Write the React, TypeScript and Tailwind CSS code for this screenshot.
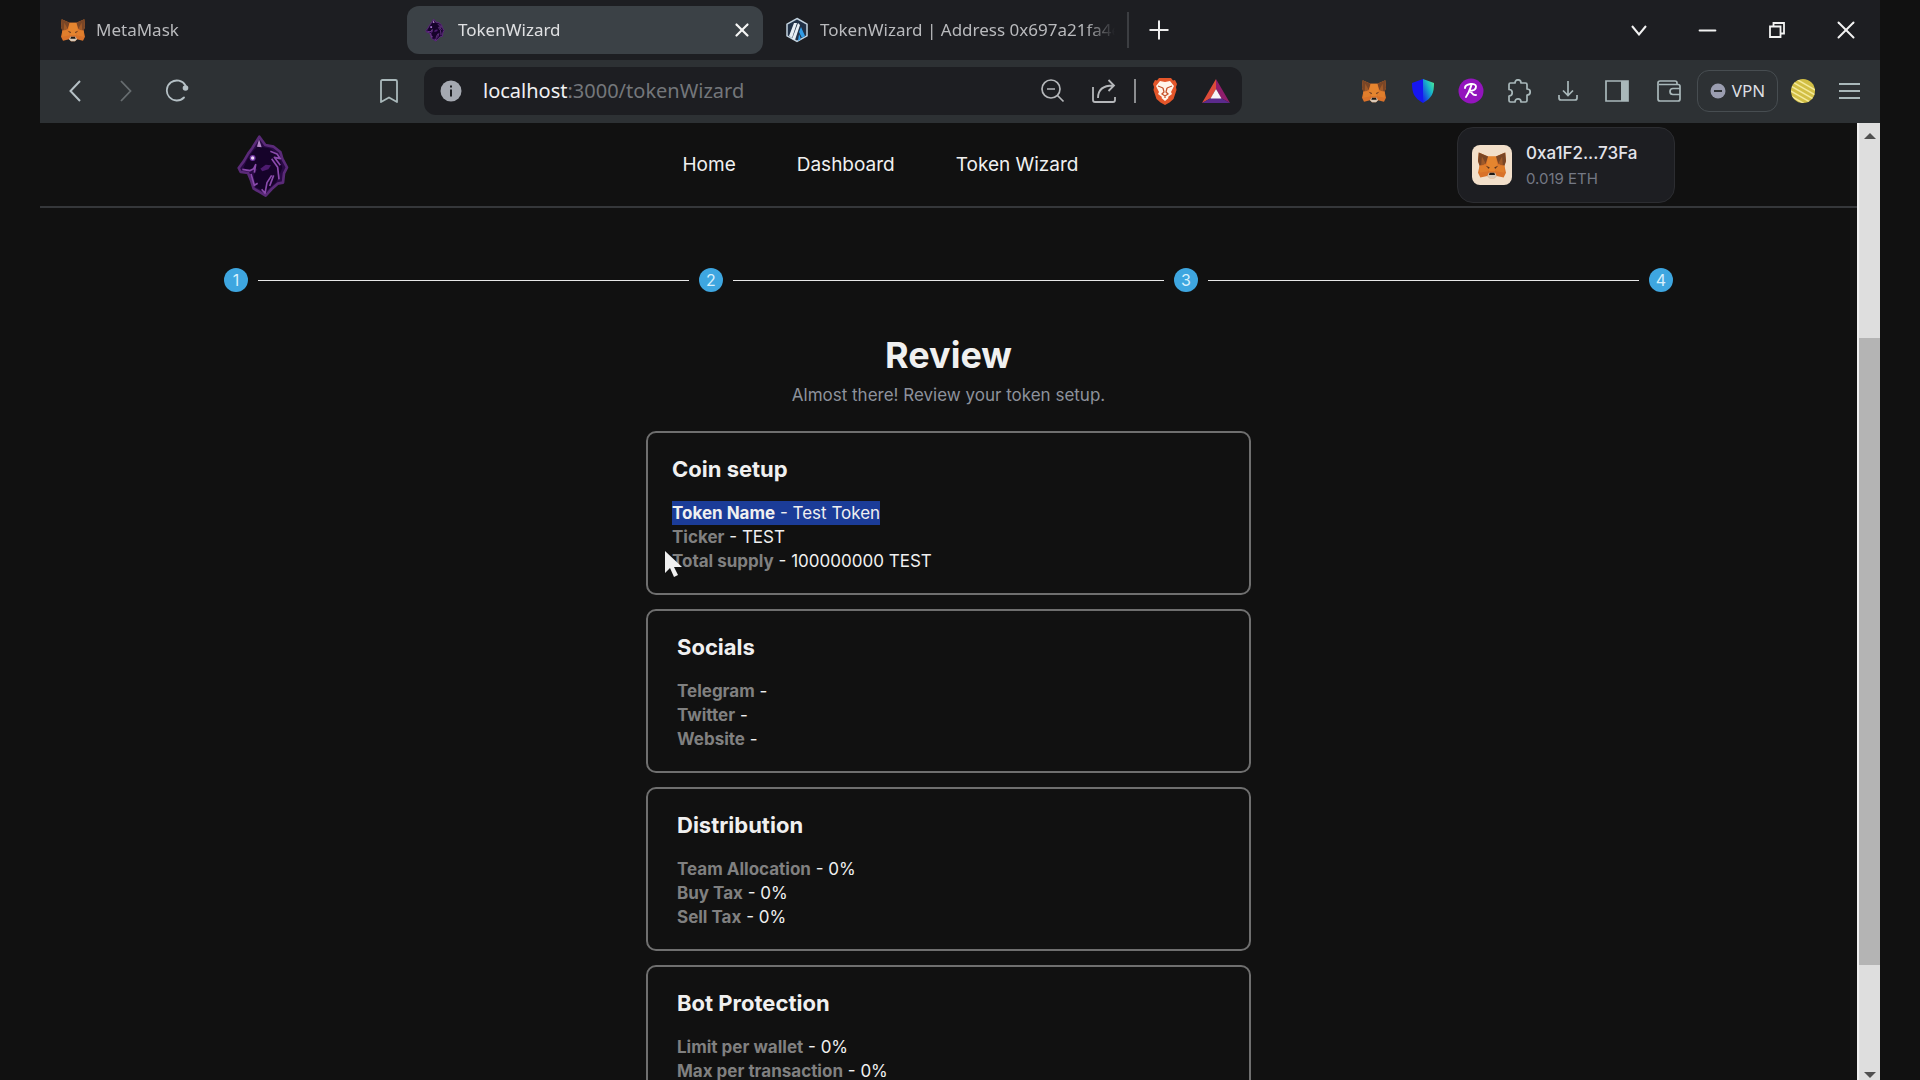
import type { ReactNode } from "react";
import { Minus, Plus, X } from "lucide-react";

type Row = { label: string; value: string; selected?: boolean };
type Section = { title: string; inset: string; rows: Row[] };

const steps = [1, 2, 3, 4];

const sections: Section[] = [
  {
    title: "Coin setup",
    inset: "px-6",
    rows: [
      { label: "Token Name", value: "Test Token", selected: true },
      { label: "Ticker", value: "TEST" },
      { label: "Total supply", value: "100000000 TEST" },
    ],
  },
  {
    title: "Socials",
    inset: "px-[29px]",
    rows: [
      { label: "Telegram", value: "" },
      { label: "Twitter", value: "" },
      { label: "Website", value: "" },
    ],
  },
  {
    title: "Distribution",
    inset: "px-[29px]",
    rows: [
      { label: "Team Allocation", value: "0%" },
      { label: "Buy Tax", value: "0%" },
      { label: "Sell Tax", value: "0%" },
    ],
  },
  {
    title: "Bot Protection",
    inset: "px-[29px]",
    rows: [
      { label: "Limit per wallet", value: "0%" },
      { label: "Max per transaction", value: "0%" },
    ],
  },
];

export default function App() {
  return (
    <div className="h-screen overflow-hidden bg-[#111111] px-10">
      <div className="flex h-full flex-col">
        <TabStrip />
        <Toolbar />
        <div className="flex min-h-0 flex-1">
          <div className="min-w-0 flex-1 overflow-hidden font-['Inter',sans-serif] text-[#f0f0f0]">
            <SiteHeader />
            <main className="pb-10">
              <Stepper />
              <Review />
            </main>
          </div>
          <Scrollbar />
        </div>
      </div>
    </div>
  );
}

function TabStrip() {
  return (
    <div className="flex h-[60px] shrink-0 items-center bg-[#1d1e22] pl-[5px] font-['Noto_Sans',sans-serif] text-[17px] text-[#b9babd]">
      <div className="flex min-w-0 gap-[6px]">
        <Tab icon={<Fox className="size-6" />} title="MetaMask" />
        <Tab icon={<Wolf className="h-6 w-6" />} title="TokenWizard" active />
        <Tab icon={<Arbiscan />} title="TokenWizard | Address 0x697a21fa4e" />
      </div>
      <span className="ml-[2px] h-9 w-[2px] bg-[#3c3e42]" />
      <button aria-label="New tab" className="flex w-[60px] justify-center text-[#eeeeee]">
        <Plus size={30} strokeWidth={1.6} />
      </button>
      <div className="ml-auto flex text-[#f2f2f2]">
        <WindowButton label="Search tabs">
          <svg viewBox="0 0 16 11" className="h-[11px] w-4" fill="none" stroke="currentColor" strokeWidth="2">
            <path d="M1 1l7 8.5L15 1" />
          </svg>
        </WindowButton>
        <WindowButton label="Minimize">
          <Minus size={27} strokeWidth={1.8} />
        </WindowButton>
        <WindowButton label="Restore">
          <svg viewBox="0 0 16 16" className="size-4" fill="none" stroke="currentColor" strokeWidth="1.8">
            <path d="M1 4.5h10.5V15H1zM4.5 4.5V1H15v10.5h-3.5" />
          </svg>
        </WindowButton>
        <WindowButton label="Close">
          <X size={30} strokeWidth={1.6} />
        </WindowButton>
      </div>
    </div>
  );
}

function Tab({ icon, title, active }: { icon: ReactNode; title: string; active?: boolean }) {
  return (
    <div
      className={`flex h-12 w-[356px] min-w-0 items-center rounded-xl pr-[10px] pl-4 ${
        active ? "bg-[#3b4146] text-[#dfe0e2]" : ""
      }`}
    >
      {icon}
      <span className="ml-[11px] flex-1 overflow-hidden whitespace-nowrap [mask-image:linear-gradient(to_right,black_90%,transparent)]">
        {title}
      </span>
      {active ? (
        <button aria-label="Close tab" className="ml-2 text-[#f5f5f5]">
          <X size={22} strokeWidth={2.4} />
        </button>
      ) : null}
    </div>
  );
}

function WindowButton({ label, children }: { label: string; children: ReactNode }) {
  return (
    <button aria-label={label} className="flex h-10 w-[69px] items-center justify-center">
      {children}
    </button>
  );
}

function Toolbar() {
  return (
    <div className="flex h-[63px] shrink-0 items-center bg-[#2d3134] pb-px font-['Noto_Sans',sans-serif] text-[#a9b2b6]">
      <div className="flex w-[384px] shrink-0 items-center pl-[9px]">
        <ToolButton label="Back" width="w-[51px]">
          <svg viewBox="0 0 12 22" className="h-[22px] w-3" fill="none" stroke="#b5c0c5" strokeWidth="2">
            <path d="M11 1L1.5 11 11 21" />
          </svg>
        </ToolButton>
        <ToolButton label="Forward" width="w-[51px]">
          <svg viewBox="0 0 12 22" className="h-[22px] w-3" fill="none" stroke="#676d70" strokeWidth="1.8">
            <path d="M1 1l9.5 10L1 21" />
          </svg>
        </ToolButton>
        <ToolButton label="Reload" width="w-[51px]">
          <svg viewBox="0 0 24 24" className="size-6" fill="none" stroke="#b5c0c5" strokeWidth="1.8">
            <path d="M19 18.5A10 10 0 1 1 20.5 6.5" strokeLinecap="round" />
            <circle cx="20.5" cy="9" r="2.8" fill="#b5c0c5" stroke="none" />
          </svg>
        </ToolButton>
        <div className="mr-[11px] ml-auto">
          <ToolButton label="Bookmark this page" width="w-12">
            <svg viewBox="0 0 18 24" className="h-6 w-[18px]" fill="none" stroke="#a9b8ba" strokeWidth="1.8">
              <path d="M1 2.5Q1 1 2.5 1h13Q17 1 17 2.5V23l-8-4.5L1 23z" strokeLinejoin="round" />
            </svg>
          </ToolButton>
        </div>
      </div>

      <div className="flex h-12 min-w-0 flex-1 items-center rounded-xl bg-[#1d1e22] pl-4">
        <svg viewBox="0 0 22 22" className="size-[22px] shrink-0">
          <circle cx="11" cy="11" r="10.5" fill="#a5a9b1" />
          <path d="M11 9.5v7M11 5.5v2" stroke="#1d1e22" strokeWidth="2" />
        </svg>
        <a href="#" className="ml-[21px] min-w-0 flex-1 truncate text-[20px] text-[#74777b]">
          <span className="text-[#f0f0f2]">localhost</span>:3000/tokenWizard
        </a>
        <ToolButton label="Zoom" width="w-[51px]">
          <svg viewBox="0 0 24 24" className="size-6" fill="none" stroke="#b5b7ba" strokeWidth="1.7">
            <circle cx="10" cy="10" r="9" />
            <path d="M6 10h8M16.5 16.5l6 6" />
          </svg>
        </ToolButton>
        <ToolButton label="Share" width="w-[51px]">
          <svg viewBox="0 0 24 24" className="size-6" fill="none" stroke="#b5b7ba" strokeWidth="1.8">
            <path d="M1 8v13q0 2 2 2h18q2 0 2-2v-3M6 19C6 11 11 6.5 21 6.5M16.5 1l5.5 5.5-5.5 5.5" />
          </svg>
        </ToolButton>
        <span className="mr-1 ml-[5px] h-6 w-[2px] bg-[#8b8d90]" />
        <ToolButton label="Brave Shields" width="w-[50px]">
          <Lion />
        </ToolButton>
        <ToolButton label="Brave Rewards" width="w-[52px]">
          <svg viewBox="0 0 28 24" className="h-6 w-7">
            <path d="M14 0 0 24l9-5 5-9z" fill="#dd4b39" />
            <path d="M14 0l14 24-9-5-5-9z" fill="#8f1d6b" />
            <path d="M0 24h28l-9-5H9z" fill="#5b2a8c" />
            <path d="M14 10l5.5 9.5h-11z" fill="#f7f4f7" />
          </svg>
        </ToolButton>
      </div>

      <div className="ml-[107px] flex shrink-0 items-center pr-[9px]">
        <ToolButton label="MetaMask" width="w-[49px]">
          <Fox className="size-6" />
        </ToolButton>
        <ToolButton label="Trust Wallet" width="w-[49px]">
          <svg viewBox="0 0 22 24" className="h-6 w-[22px]">
            <defs>
              <linearGradient id="shield" x1="1" y1="0" x2="0" y2="1">
                <stop offset="0" stopColor="#58f08c" />
                <stop offset="0.4" stopColor="#18b8c8" />
                <stop offset="1" stopColor="#1414ee" />
              </linearGradient>
            </defs>
            <path d="M11 0 0 4c0 10 2 15 11 20z" fill="#1616f0" />
            <path d="M11 0l11 4c0 10-2 15-11 20z" fill="url(#shield)" />
          </svg>
        </ToolButton>
        <ToolButton label="Ronin" width="w-[48px]">
          <svg viewBox="0 0 26 26" className="size-[26px]">
            <circle cx="13" cy="13" r="12.5" fill="#9314bd" />
            <path
              d="M7 10C7 6 18 4 18 8.5c0 3.5-4 4.5-7 4.5 3 0 3 5 7 4M13.5 7C12 11 11 15 8 19"
              fill="none"
              stroke="#ffffff"
              strokeWidth="1.9"
              strokeLinecap="round"
            />
          </svg>
        </ToolButton>
        <ToolButton label="Extensions" width="w-[48px]">
          <svg viewBox="0 0 24 24" className="size-6" fill="none" stroke="#a9b8ba" strokeWidth="1.7">
            <path
              d="M3.5 4H8C8-.3 14-.3 14 4h4.5q1.500 0 1.500 1.500V10c4.300 0 4.300 6 0 6v5.500q0 1.500-1.500 1.500H14c0-4.300-6-4.300-6 0H3.500Q2 23 2 21.500V17c4.300 0 4.300-6.500 0-6.500v-5Q2 4 3.500 4z"
              strokeLinejoin="round"
            />
          </svg>
        </ToolButton>
        <ToolButton label="Downloads" width="w-[49px]">
          <svg viewBox="0 0 20 20" className="size-5" fill="none" stroke="#a9b8ba" strokeWidth="1.7">
            <path d="M10 0v14M5 9.5l5 5 5-5M1 14v3q0 2 2 2h14q2 0 2-2v-3" />
          </svg>
        </ToolButton>
        <ToolButton label="Sidebar" width="w-[49px]">
          <svg viewBox="0 0 24 22" className="h-[22px] w-6">
            <path d="M1 1h22v20H1z" fill="none" stroke="#a9b8ba" strokeWidth="1.7" />
            <path d="M16 1h7v20h-7z" fill="#a9b8ba" />
          </svg>
        </ToolButton>
        <ToolButton label="Wallet" width="w-[56px]">
          <svg viewBox="0 0 24 22" className="h-[22px] w-6" fill="none" stroke="#a9b8ba" strokeWidth="1.7">
            <path d="M20 4.5V3q0-2-2-2H3Q1 1 1 3v16q0 2 2 2h18q2 0 2-2V6.5q0-2-2-2H2M23 8.500h-7q-3 0-3 3t3 3h7" />
          </svg>
        </ToolButton>
        <button className="flex h-[42px] w-[81px] items-center justify-center gap-[6px] rounded-xl border border-[#474d51] text-[17px] text-[#dddfe2]">
          <svg viewBox="0 0 16 16" className="size-4">
            <circle cx="8" cy="8" r="7.5" fill="#9a9db0" />
            <path d="M4 8h8" stroke="#2d3134" strokeWidth="2" />
          </svg>
          VPN
        </button>
        <ToolButton label="Profile" width="w-[49px]">
          <svg viewBox="0 0 24 24" className="size-6">
            <defs>
              <clipPath id="avatar">
                <circle cx="12" cy="12" r="12" />
              </clipPath>
            </defs>
            <g clipPath="url(#avatar)">
              <path d="M0 0h24v24H0z" fill="#d2bf45" />
              <path
                d="M-2-4l28 16M-2 1l28 16M-2 6l28 16M-2 11l28 16M-2 16l28 16"
                stroke="#f4e99a"
                strokeWidth="1.5"
              />
            </g>
          </svg>
        </ToolButton>
        <ToolButton label="Menu" width="w-11">
          <svg viewBox="0 0 21 16" className="h-4 w-[21px]" stroke="#a9b8ba" strokeWidth="1.8">
            <path d="M0 1h21M0 8h21M0 15h21" />
          </svg>
        </ToolButton>
      </div>
    </div>
  );
}

function ToolButton({ label, width, children }: { label: string; width: string; children: ReactNode }) {
  return (
    <button aria-label={label} className={`flex h-10 shrink-0 items-center justify-center ${width}`}>
      {children}
    </button>
  );
}

function SiteHeader() {
  return (
    <header className="flex h-[85px] items-center justify-between border-b-2 border-[#35373a] px-[182px]">
      <a href="#" aria-label="TokenWizard" className="flex w-[82px] justify-center pt-[3px]">
        <Wolf className="h-16 w-[52px]" />
      </a>
      <nav className="flex gap-[61px] pt-[2px] text-[19px]">
        <a href="#">Home</a>
        <a href="#">Dashboard</a>
        <a href="#">Token Wizard</a>
      </nav>
      <button className="flex h-[76px] w-[218px] items-center gap-[14px] rounded-2xl border border-[#2c2d31] bg-[#1d1e22] pl-[14px] text-left">
        <span className="flex size-10 items-center justify-center rounded-lg bg-[#f2dfca]">
          <Fox className="size-7" />
        </span>
        <span className="flex flex-col">
          <span className="text-[17px] leading-7 font-medium text-[#e4e4ea]">0xa1F2...73Fa</span>
          <span className="text-[15px] leading-6 text-[#757985]">0.019 ETH</span>
        </span>
      </button>
    </header>
  );
}

function Stepper() {
  return (
    <ol className="flex items-center px-[184px] pt-[60px]">
      {steps.map((step) => (
        <li key={step} className={`flex items-center ${step < steps.length ? "flex-1" : ""}`}>
          <span className="flex size-6 items-center justify-center rounded-full bg-[#3ea6e0] text-[16px] text-[#d8f0fc]">
            {step}
          </span>
          {step < steps.length ? <span className="mx-[10px] h-px flex-1 bg-[#e8e8e8]" /> : null}
        </li>
      ))}
    </ol>
  );
}

function Review() {
  return (
    <section className="mt-10 flex flex-col items-center">
      <h1 className="text-[36px] leading-[46px] font-bold">Review</h1>
      <p className="mt-[5px] text-[17px] leading-6 text-[#8d929c]">Almost there! Review your token setup.</p>
      <div className="mt-6 flex w-full max-w-[605px] flex-col gap-[14px]">
        {sections.map((section) => (
          <ReviewCard key={section.title} section={section} />
        ))}
      </div>
    </section>
  );
}

function ReviewCard({ section }: { section: Section }) {
  return (
    <article className={`relative rounded-[10px] border-2 border-[#6f6f6f] py-5 ${section.inset}`}>
      <h2 className="text-[22px] leading-8 font-bold">{section.title}</h2>
      <ul className="mt-4 text-[17px] leading-6">
        {section.rows.map((row) => (
          <li key={row.label} className="flex">
            <span className={row.selected ? "bg-[#1b3c98]" : ""}>
              <b className={row.selected ? "font-bold" : "font-bold text-[#808080]"}>{row.label}</b> - {row.value}
            </span>
          </li>
        ))}
      </ul>
      {section.title === "Coin setup" ? <Pointer /> : null}
    </article>
  );
}

function Pointer() {
  return (
    <svg viewBox="0 0 17 26" className="absolute top-[118px] left-[17px] h-[26px] w-[17px]">
      <path d="M0 0v22l5-5 4 9 4-2-4-8h8z" fill="#f0f0f0" />
    </svg>
  );
}

function Scrollbar() {
  return (
    <div className="flex w-[23px] shrink-0 flex-col items-center border-l-2 border-[#eeeeee] bg-[#dedede] pt-[10px] pb-[2px]">
      <svg viewBox="0 0 12 6" className="h-[6px] w-3">
        <path d="M0 6l6-6 6 6z" fill="#505050" />
      </svg>
      <div className="flex w-full flex-1 flex-col">
        <div className="grow-[199]" />
        <div className="grow-[627] bg-[#b4b4b4]" />
        <div className="grow-[107]" />
      </div>
      <svg viewBox="0 0 12 6" className="h-[6px] w-3">
        <path d="M0 0l6 6 6-6z" fill="#505050" />
      </svg>
    </div>
  );
}

function Fox({ className }: { className: string }) {
  return (
    <svg viewBox="0 0 36 34" className={`shrink-0 ${className}`}>
      <path d="M1 1l12 5h10l12-5 1 11-2 6 2 9-3 6-9-2-3 3h-6l-3-3-9 2-3-6 2-9-2-6z" fill="#d9722a" />
      <path d="M1 1l12 5-3 9-8 3-2-6zM35 1L23 6l3 9 8 3 2-6z" fill="#7a4626" />
      <path d="M5 6l5 9-6 3zM31 6l-5 9 6 3z" fill="#a05a28" />
      <path d="M13 6h10l2 10-3 9h-8l-3-9z" fill="#e5852f" />
      <path d="M2 18l10-1 1 8-11 2zM34 18l-10-1-1 8 11 2z" fill="#e07e2c" />
      <path d="M10 18l5 2-1 2zM26 18l-5 2 1 2z" fill="#5a3420" />
      <path d="M12 31l2-4h8l2 4-3 3h-6z" fill="#d8c9b8" />
      <path d="M15 27h6l1 3h-8z" fill="#1c1815" />
    </svg>
  );
}

function Wolf({ className }: { className: string }) {
  return (
    <svg viewBox="50 30 156 192" className={`shrink-0 ${className}`} strokeLinejoin="round">
      <path
        d="M117 38l18 25 25 5 20 16 6 20 14 26-9 18-3 28-16 3-18 16-18 20-20-12-16-9-8-25-9-22-22-3-6-12 15-20 14-24 12-16z"
        fill="#2a0a45"
        stroke="#5a2a78"
        strokeWidth="8"
      />
      <path
        d="M112 66l40 8 24 22 10 36-18 42-34 30-28-14-6-36 12-20-16 2-28-2 12-26 16-24z"
        fill="#16032a"
      />
      <path
        d="M66 136l22 4 12-6 6-12-4 24M92 150l10 34 10-6M124 196l10 12 6-32 14-22M148 186l12-32M176 166l-4-36-18-26M150 82l20 8 10 14-18-4 18 24"
        fill="none"
        stroke="#8a4aac"
        strokeWidth="5"
      />
      <path d="M116 46l-6 22 14 2z" fill="#b58ac8" />
      <path d="M120 134l16-12 16 2-8 12-18 6z" fill="#4d1b70" />
      <circle cx="97" cy="102" r="9" fill="#6f35a0" />
      <circle cx="97" cy="102" r="5" fill="#f0d8fa" />
    </svg>
  );
}

function Arbiscan() {
  return (
    <svg viewBox="0 0 24 26" className="h-[26px] w-6 shrink-0">
      <path d="M12 1.5l10 5.7v11.6l-10 5.7-10-5.7V7.2z" fill="#213147" stroke="#c3d3e0" strokeWidth="1.5" />
      <path d="M9 6h3L7 21l-3-2zM13 6l2 2-5 15-3-1z" fill="#e8eef4" />
      <path d="M16 10l4 9-3 2-3-6zM14 17l2 5-3 2z" fill="#2f9be6" />
    </svg>
  );
}

function Lion() {
  return (
    <svg viewBox="0 0 24 28" className="h-7 w-6">
      <path
        d="M6 1h12l2 2.5 2-.5 2 4-1 3 .5 3-3 9-4 3.5L12 28l-4.500-2.500-4-3.500-3-9L1 10 0 7l2-4 2 .5z"
        fill="#e4562a"
      />
      <path
        d="M12 5l5-1 4 5-3 6 1 2-4 3 .5 1L12 24l-3.500-3 .5-1-4-3 1-2-3-6 4-5z"
        fill="#fff4ea"
      />
      <path
        d="M5 9l5 2M19 9l-5 2M10 11l1 4-2 2 3 2 3-2-2-2 1-4M12 19v2"
        fill="none"
        stroke="#c8542c"
        strokeWidth="1.3"
      />
    </svg>
  );
}
